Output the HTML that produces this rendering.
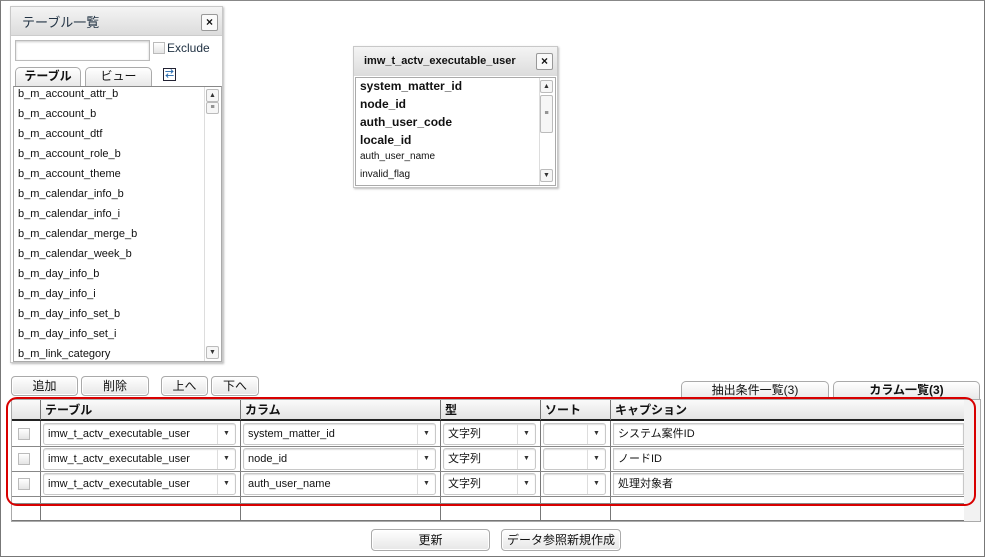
<!DOCTYPE html>
<html><head><meta charset="utf-8"><style>
*{box-sizing:border-box;margin:0;padding:0}
body{width:985px;height:557px;background:#fff;position:relative;overflow:hidden;font-family:"Liberation Sans","Noto Sans CJK JP",sans-serif;color:#111;font-size:11px}
.a{position:absolute}
.frame{left:0;top:0;width:985px;height:557px;border:1px solid #777;border-top:1px solid #888}
.panel{background:#fff;border:1px solid #c8c8c8;box-shadow:1px 1px 2px #bbb}
.title{background:linear-gradient(#f4f4f4,#dcdcdc);}
.close{width:17px;height:17px;border:1px solid #999;background:#fafafa;font-weight:bold;font-size:12px;text-align:center;line-height:14px;border-radius:2px}
.btn{border:1px solid #aaa;border-radius:4px;background:linear-gradient(#fff,#e6e6e6);text-align:center;font-size:12px;line-height:18px;box-shadow:inset 0 0 0 1px #fff}
.tab{border:1px solid #aaa;border-bottom:none;border-radius:5px 5px 0 0;background:linear-gradient(#fff,#e8e8e8);text-align:center;font-size:12px;line-height:17px}
.li{left:6px;font-size:11px;color:#111}
.sb{background:#fff;border-left:1px solid #ddd}
.sbtn{width:13px;height:13px;border:1px solid #bbb;border-radius:2px;background:#f6f6f6;font-size:7px;text-align:center;line-height:11px;color:#333}
.sel{border:1px solid #c8c8c8;border-radius:3px;background:#fff;font-size:11px;line-height:20px;padding-left:4px;height:22px;box-shadow:inset 0 1px 1px #ddd}
.arr{position:absolute;right:0;top:0;width:18px;height:20px;border-left:1px solid #ddd;font-size:7px;text-align:center;line-height:20px;color:#333}
.cb{width:12px;height:12px;border:1px solid #bbb;background:linear-gradient(#fff,#e4e4e4)}
.hd{font-weight:bold;font-size:12px;line-height:20px;padding-left:4px;border-left:1px solid #777}
</style></head><body>
<div class="a frame"></div>

<div class="a panel" style="left:10px;top:6px;width:213px;height:357px"></div>
<div class="a title" style="left:11px;top:7px;width:211px;height:29px;border-bottom:1px solid #ccc"></div>
<div class="a" style="left:22px;top:12px;font-size:13px;color:#234">テーブル一覧</div>
<div class="a close" style="left:201px;top:14px">×</div>
<div class="a" style="left:15px;top:40px;width:135px;height:21px;border:1px solid #bbb;box-shadow:inset 0 1px 2px #ccc"></div>
<div class="a cb" style="left:153px;top:42px"></div>
<div class="a" style="left:167px;top:41px;font-size:12px;color:#234">Exclude</div>
<div class="a tab" style="left:15px;top:67px;width:66px;height:19px;font-weight:bold">テーブル</div>
<div class="a tab" style="left:85px;top:67px;width:67px;height:19px">ビュー</div>
<div class="a" style="left:163px;top:68px;width:13px;height:13px;border:1px solid #223;font-size:9px;line-height:11px;text-align:center;color:#26a;font-weight:bold">⇄</div>
<div class="a" style="left:13px;top:86px;width:209px;height:276px;border:1px solid #aaa;border-top:1px solid #888;background:#fff"></div>
<div class="a li" style="left:18px;top:88px">b_m_account_attr_b</div>
<div class="a li" style="left:18px;top:108px">b_m_account_b</div>
<div class="a li" style="left:18px;top:128px">b_m_account_dtf</div>
<div class="a li" style="left:18px;top:148px">b_m_account_role_b</div>
<div class="a li" style="left:18px;top:168px">b_m_account_theme</div>
<div class="a li" style="left:18px;top:188px">b_m_calendar_info_b</div>
<div class="a li" style="left:18px;top:208px">b_m_calendar_info_i</div>
<div class="a li" style="left:18px;top:228px">b_m_calendar_merge_b</div>
<div class="a li" style="left:18px;top:248px">b_m_calendar_week_b</div>
<div class="a li" style="left:18px;top:268px">b_m_day_info_b</div>
<div class="a li" style="left:18px;top:288px">b_m_day_info_i</div>
<div class="a li" style="left:18px;top:308px">b_m_day_info_set_b</div>
<div class="a li" style="left:18px;top:328px">b_m_day_info_set_i</div>
<div class="a li" style="left:18px;top:348px">b_m_link_category</div>
<div class="a sb" style="left:204px;top:87px;width:17px;height:274px"></div>
<div class="a sbtn" style="left:206px;top:89px">▲</div>
<div class="a sbtn" style="left:206px;top:102px;height:12px;line-height:9px">≡</div>
<div class="a sbtn" style="left:206px;top:346px">▼</div>

<div class="a panel" style="left:353px;top:46px;width:205px;height:142px"></div>
<div class="a title" style="left:354px;top:47px;width:203px;height:29px"></div>
<div class="a" style="left:364px;top:55px;font-size:11px;font-weight:bold">imw_t_actv_executable_user</div>
<div class="a close" style="left:536px;top:53px">×</div>
<div class="a" style="left:355px;top:77px;width:201px;height:109px;border:1px solid #aaa;background:#fff"></div>
<div class="a" style="left:360px;top:79px;font-size:12px;font-weight:bold">system_matter_id</div>
<div class="a" style="left:360px;top:97px;font-size:12px;font-weight:bold">node_id</div>
<div class="a" style="left:360px;top:115px;font-size:12px;font-weight:bold">auth_user_code</div>
<div class="a" style="left:360px;top:133px;font-size:12px;font-weight:bold">locale_id</div>
<div class="a" style="left:360px;top:151px;font-size:10px">auth_user_name</div>
<div class="a" style="left:360px;top:169px;font-size:10px">invalid_flag</div>
<div class="a sb" style="left:539px;top:78px;width:16px;height:107px"></div>
<div class="a sbtn" style="left:540px;top:80px">▲</div>
<div class="a sbtn" style="left:540px;top:95px;height:38px;line-height:36px">≡</div>
<div class="a sbtn" style="left:540px;top:169px">▼</div>

<div class="a btn" style="left:11px;top:376px;width:67px;height:20px">追加</div>
<div class="a btn" style="left:81px;top:376px;width:68px;height:20px">削除</div>
<div class="a btn" style="left:161px;top:376px;width:47px;height:20px">上へ</div>
<div class="a btn" style="left:211px;top:376px;width:48px;height:20px">下へ</div>
<div class="a tab" style="left:681px;top:381px;width:148px;height:19px">抽出条件一覧(3)</div>
<div class="a tab" style="left:833px;top:381px;width:147px;height:19px;font-weight:bold">カラム一覧(3)</div>

<div class="a" style="left:11px;top:399px;width:970px;height:123px;border:1px solid #aaa;background:#f2f2f2"></div>
<div class="a" style="left:12px;top:400px;width:952px;height:121px;background:#fff;border-bottom:1px solid #777"></div>
<div class="a" style="left:12px;top:400px;width:952px;height:21px;background:linear-gradient(#fafafa,#e4e4e4);border-bottom:2px solid #222"></div>
<div class="a hd" style="left:40px;top:400px;width:200px">テーブル</div>
<div class="a hd" style="left:240px;top:400px;width:200px">カラム</div>
<div class="a hd" style="left:440px;top:400px;width:100px">型</div>
<div class="a hd" style="left:540px;top:400px;width:70px">ソート</div>
<div class="a hd" style="left:610px;top:400px;width:354px">キャプション</div>
<div class="a" style="left:40px;top:421px;width:1px;height:100px;background:#777"></div>
<div class="a" style="left:240px;top:421px;width:1px;height:100px;background:#777"></div>
<div class="a" style="left:440px;top:421px;width:1px;height:100px;background:#777"></div>
<div class="a" style="left:540px;top:421px;width:1px;height:100px;background:#777"></div>
<div class="a" style="left:610px;top:421px;width:1px;height:100px;background:#777"></div>
<div class="a" style="left:12px;top:446px;width:952px;height:1px;background:#888"></div>
<div class="a" style="left:12px;top:471px;width:952px;height:1px;background:#888"></div>
<div class="a" style="left:12px;top:496px;width:952px;height:1px;background:#888"></div>
<div class="a" style="left:12px;top:503px;width:952px;height:1px;background:#888"></div>

<div class="a cb" style="left:18px;top:428px"></div>
<div class="a sel" style="left:43px;top:423px;width:193px">imw_t_actv_executable_user<div class="arr">▼</div></div>
<div class="a sel" style="left:243px;top:423px;width:193px">system_matter_id<div class="arr">▼</div></div>
<div class="a sel" style="left:443px;top:423px;width:93px">文字列<div class="arr">▼</div></div>
<div class="a sel" style="left:543px;top:423px;width:63px"><div class="arr">▼</div></div>
<div class="a sel" style="left:613px;top:423px;width:351px;border-radius:0">システム案件ID</div>
<div class="a cb" style="left:18px;top:453px"></div>
<div class="a sel" style="left:43px;top:448px;width:193px">imw_t_actv_executable_user<div class="arr">▼</div></div>
<div class="a sel" style="left:243px;top:448px;width:193px">node_id<div class="arr">▼</div></div>
<div class="a sel" style="left:443px;top:448px;width:93px">文字列<div class="arr">▼</div></div>
<div class="a sel" style="left:543px;top:448px;width:63px"><div class="arr">▼</div></div>
<div class="a sel" style="left:613px;top:448px;width:351px;border-radius:0">ノードID</div>
<div class="a cb" style="left:18px;top:478px"></div>
<div class="a sel" style="left:43px;top:473px;width:193px">imw_t_actv_executable_user<div class="arr">▼</div></div>
<div class="a sel" style="left:243px;top:473px;width:193px">auth_user_name<div class="arr">▼</div></div>
<div class="a sel" style="left:443px;top:473px;width:93px">文字列<div class="arr">▼</div></div>
<div class="a sel" style="left:543px;top:473px;width:63px"><div class="arr">▼</div></div>
<div class="a sel" style="left:613px;top:473px;width:351px;border-radius:0">処理対象者</div>

<div class="a" style="left:6px;top:397px;width:970px;height:109px;border:2px solid #d80000;border-radius:11px"></div>

<div class="a btn" style="left:371px;top:529px;width:119px;height:22px;line-height:20px">更新</div>
<div class="a btn" style="left:501px;top:529px;width:120px;height:22px;line-height:20px">データ参照新規作成</div>
</body></html>
